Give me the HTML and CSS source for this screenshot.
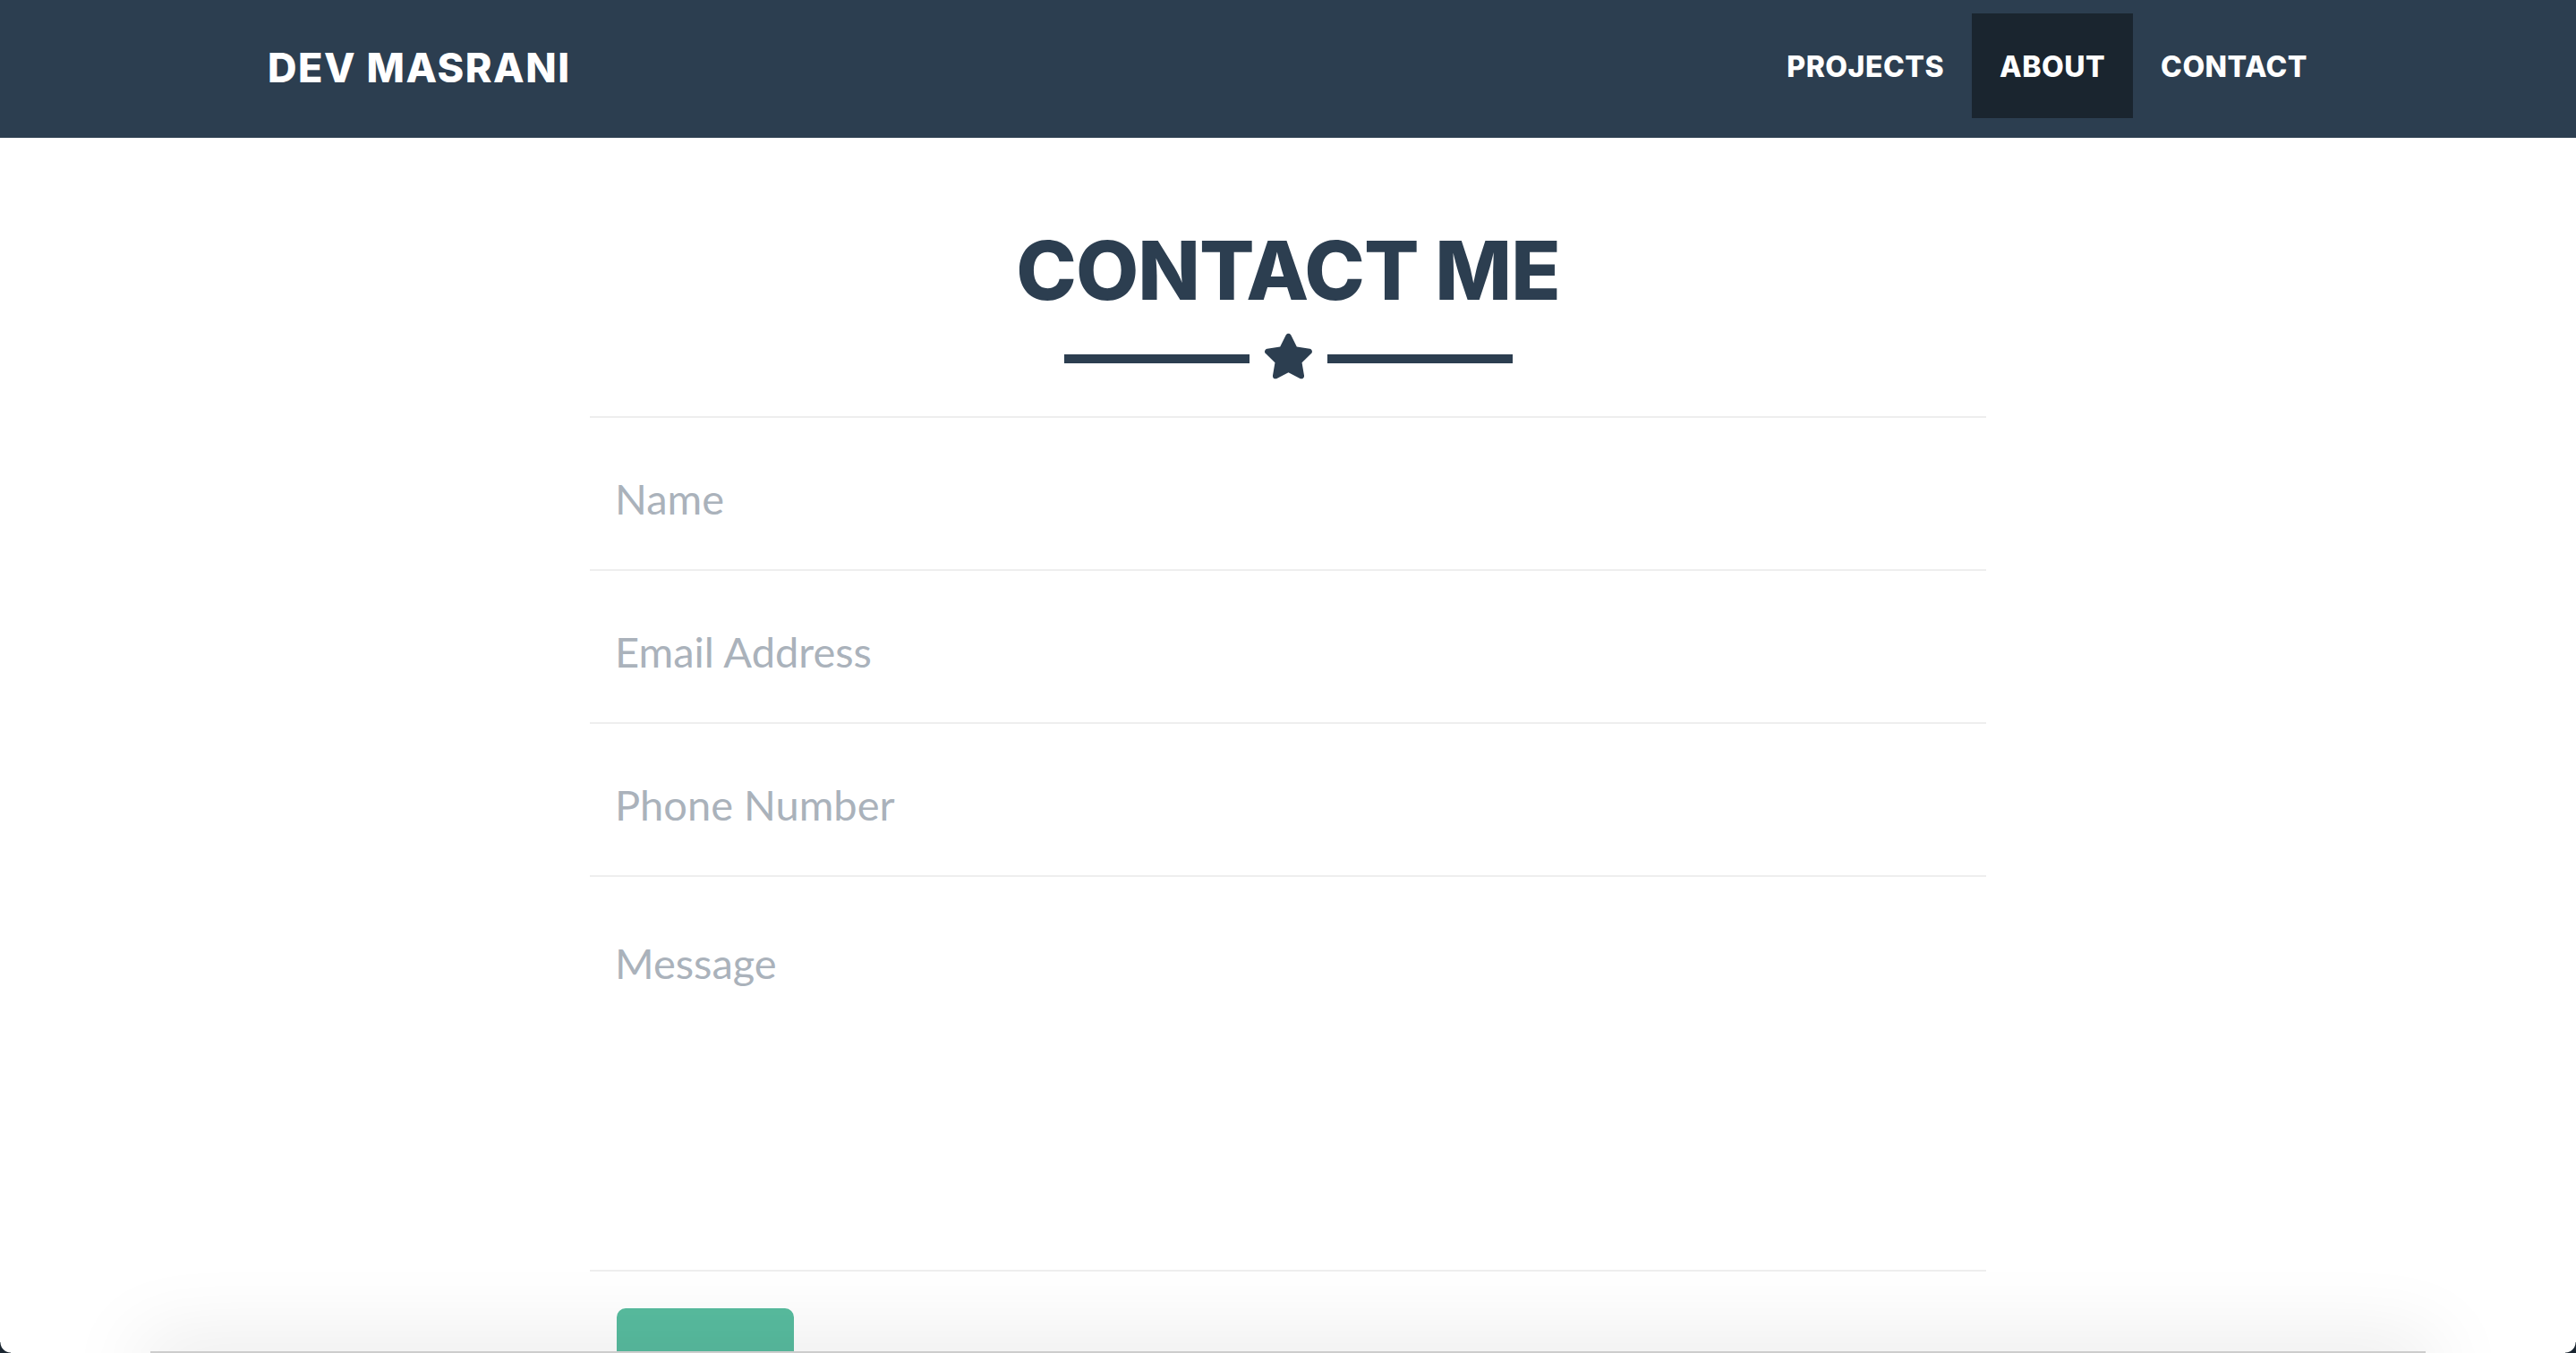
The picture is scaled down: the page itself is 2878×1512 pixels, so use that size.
FILE: index.html
```html
<!DOCTYPE html>
<html lang="en">
<head>
<meta charset="utf-8">
<title>Dev Masrani</title>
<link rel="stylesheet" href="styles.css">
</head>
<body>
<header class="navbar">
  <div class="nav-inner">
    <a class="brand" href="#">DEV MASRANI</a>
    <ul class="nav-links">
      <li><a href="#">PROJECTS</a></li>
      <li class="active"><a href="#">ABOUT</a></li>
      <li><a href="#">CONTACT</a></li>
    </ul>
  </div>
</header>

<section class="contact">
  <h2 class="title">CONTACT ME</h2>
  <div class="divider">
    <span class="line"></span>
    <svg class="star" viewBox="0 0 576 512" aria-hidden="true"><path d="M259.3 17.8L194 150.2 47.9 171.5c-26.2 3.8-36.7 36.1-17.7 54.6l105.7 103-25 145.5c-4.5 26.3 23.2 46 46.4 33.7L288 439.6l130.7 68.7c23.2 12.2 50.9-7.4 46.4-33.7l-25-145.5 105.7-103c19-18.5 8.5-50.8-17.7-54.6L382 150.2 316.7 17.8c-11.7-23.6-45.6-23.9-57.4 0z"/></svg>
    <span class="line"></span>
  </div>

  <form class="form">
    <div class="field first"><input type="text" placeholder="Name"></div>
    <div class="field"><input type="email" placeholder="Email Address"></div>
    <div class="field"><input type="tel" placeholder="Phone Number"></div>
    <div class="field tall"><textarea placeholder="Message"></textarea></div>
    <div class="actions"><button type="button" class="send" aria-label="Send"></button></div>
  </form>
</section>

<div class="dock"></div>
<div class="corner left"></div>
<div class="corner right"></div>
</body>
</html>
```

FILE: styles.css
```css
html, body {
  margin: 0;
  padding: 0;
  height: 1512px;
  overflow: hidden;
  background: #ffffff;
}

body {
  font-family: "Lato", "Open Sans", sans-serif;
  color: #2c3e50;
}

.navbar {
  background: #2c3e50;
  height: 154px;
  box-sizing: border-box;
}

.nav-inner {
  width: 2340px;
  margin: 0 auto;
  padding: 0 30px;
  box-sizing: border-box;
  display: flex;
  justify-content: space-between;
  height: 100%;
}

.brand {
  font-family: "Inter", "DejaVu Sans", sans-serif;
  font-weight: 800;
  font-size: 45px;
  letter-spacing: 1.5px;
  color: #ffffff;
  text-decoration: none;
  line-height: 151px;
}

.nav-links {
  list-style: none;
  margin: 0 -30px 0 0;
  padding: 15px 0 0 0;
  display: flex;
  align-items: flex-start;
}

.nav-links li a {
  display: block;
  height: 117px;
  line-height: 120px;
  padding: 0 31px;
  font-family: "Inter", "DejaVu Sans", sans-serif;
  font-weight: 800;
  font-size: 32px;
  letter-spacing: 0.5px;
  color: #ffffff;
  text-decoration: none;
}

.nav-links li.active a {
  background: #1a252f;
}

.contact {
  padding-top: 98px;
}

.title {
  margin: 0;
  text-align: center;
  font-family: "Inter", "DejaVu Sans", sans-serif;
  font-weight: 800;
  font-size: 91px;
  line-height: 100px;
  letter-spacing: -1px;
  color: #2c3e50;
}

.divider {
  display: flex;
  align-items: center;
  justify-content: center;
  gap: 15px;
  margin-top: 18px;
  height: 56px;
}

.divider .line {
  width: 207px;
  height: 10px;
  background: #2c3e50;
  margin-top: 6px;
}

.divider .star {
  width: 57px;
  height: 54px;
  fill: #2c3e50;
}

.form {
  width: 1560px;
  margin: 39px auto 0;
}

.field {
  border-bottom: 2px solid #eeeeee;
  padding: 0 28px;
}

.field.first {
  border-top: 2px solid #eeeeee;
}

.field input,
.field textarea {
  display: block;
  width: 100%;
  box-sizing: border-box;
  border: none;
  outline: none;
  background: transparent;
  font-family: "Lato", sans-serif;
  font-size: 47px;
  color: #2c3e50;
  margin: 0;
}

.field input {
  height: 169px;
  padding: 10px 0 0 0;
}

.field textarea {
  height: 439px;
  padding: 68px 0 0 0;
  line-height: 1.2;
  resize: none;
}

.field input::placeholder,
.field textarea::placeholder {
  color: #aab2bb;
  opacity: 1;
}

.actions {
  padding: 41px 30px 0;
}

.send {
  display: block;
  width: 198px;
  height: 48px;
  padding: 0;
  border: none;
  border-radius: 10px 10px 0 0;
  background: #58bc9f;
}

.dock {
  position: fixed;
  left: 168px;
  right: 168px;
  top: 1510px;
  height: 40px;
  background: #cdcdcd;
  box-shadow: 0 0 90px 10px rgba(0, 0, 0, 0.10);
}

.corner {
  position: fixed;
  bottom: 0;
  width: 12px;
  height: 12px;
}

.corner.left {
  left: 0;
  background: radial-gradient(circle at 12px 0, transparent 11px, #1b2631 12px);
}

.corner.right {
  right: 0;
  background: radial-gradient(circle at 0 0, transparent 11px, #1b2631 12px);
}
```
